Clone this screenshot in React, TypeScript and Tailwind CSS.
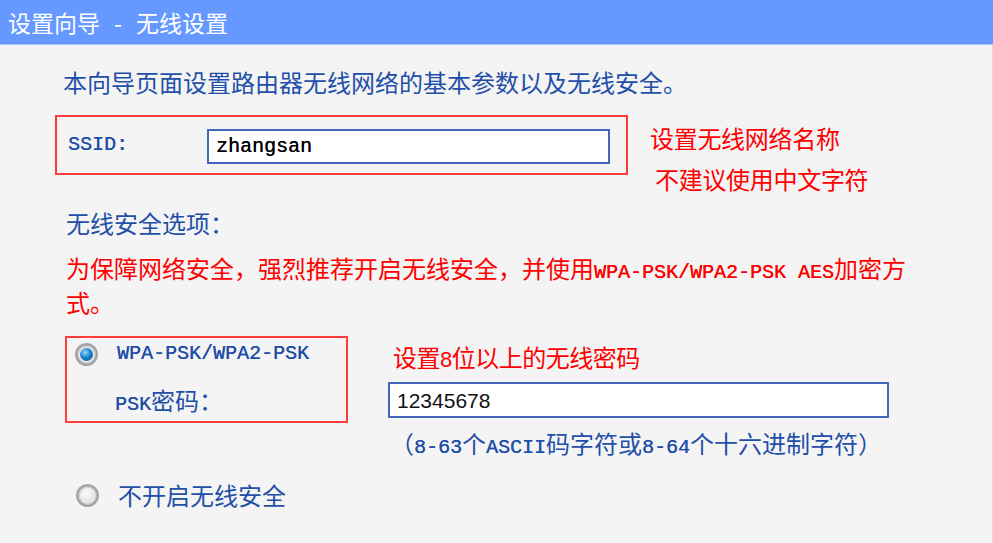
import React from "react";

const cjk = "font-['Noto_Sans_CJK_SC',sans-serif]";
const mono =
  "font-['Liberation_Mono','Noto_Sans_CJK_SC',monospace] text-[20px] leading-none [text-shadow:0.3px_0_0_currentColor]";

function Radio({ checked }: { checked?: boolean }) {
  return (
    <div className="w-[23px] h-[23px] shrink-0 rounded-full bg-[radial-gradient(circle,#f4f4f4_42%,#9c9c9c_62%,#d8d8d8_90%)] flex items-center justify-center">
      {checked ? (
        <div className="w-[13px] h-[13px] rounded-full bg-[radial-gradient(circle_at_40%_35%,#9ad8ff,#1b83d0_45%,#0b3f7c)]" />
      ) : (
        <div className="w-[13px] h-[13px] rounded-full bg-[radial-gradient(circle_at_40%_35%,#ffffff,#e6e6e6_60%,#cfcfcf)]" />
      )}
    </div>
  );
}

export default function App() {
  return (
    <div className={`w-[993px] h-[543px] overflow-hidden bg-[#f4f4f4] flex flex-col ${cjk}`}>
      <div className="h-[45px] shrink-0 bg-[#6699ff] border-b border-[#a9c5ff] flex items-center pl-[8px] text-white text-[23px]">
        设置向导<span className="mx-[14px]">-</span>无线设置
      </div>

      <div className="flex-1 flex flex-col border-r border-[#f0d8b8] text-[#1f4fa8] text-[24px] leading-[32px]">
        <div className="mt-[21px] ml-[63px]">本向导页面设置路由器无线网络的基本参数以及无线安全。</div>

        <div className="mt-[17px] ml-[55px] flex items-start h-[60px]">
          <div className="w-[573px] h-[60px] border-2 border-[#ff3b3b] flex items-center pl-[11px]">
            <span className={`${mono} w-[139px]`}>SSID:</span>
            <div className="w-[403px] h-[35px] mt-[3px] border-2 border-[#4466bb] bg-white flex items-center pl-[7px]">
              <span className={`${mono} text-black`}>zhangsan</span>
            </div>
          </div>
          <div className="ml-[22px] pt-[2px] text-[#ff0000] leading-[41px] tracking-[-0.3px]">
            <div>设置无线网络名称</div>
            <div className="pl-[5px]">不建议使用中文字符</div>
          </div>
        </div>

        <div className="mt-[32px] ml-[66px]">无线安全选项：</div>

        <div className="mt-[12px] ml-[66px] text-[#ff0000] leading-[34px]">
          <div className="h-[34px]">
            为保障网络安全，强烈推荐开启无线安全，并使用<span className={mono}>WPA-PSK/WPA2-PSK AES</span>加密方
          </div>
          <div className="h-[34px]">式。</div>
        </div>

        <div className="mt-[17px] ml-[65px] flex items-start">
          <div className="w-[283px] h-[87px] border-2 border-[#ff3b3b] flex flex-col pt-[4px] pl-[8px]">
            <div className="flex items-center h-[24px]">
              <Radio checked />
              <span className={`${mono} ml-[19px]`}>WPA-PSK/WPA2-PSK</span>
            </div>
            <div className="mt-[18px] ml-[40px] h-[32px]">
              <span className={mono}>PSK</span>密码：
            </div>
          </div>
          <div className="ml-[40px] flex flex-col">
            <div className="h-[32px] mt-[5px] pl-[5px] text-[#ff0000] tracking-[-0.5px]">
              设置<span className="font-['Liberation_Sans',sans-serif] text-[22px] leading-none">8</span>位以上的无线密码
            </div>
            <div className="mt-[9px] w-[501px] h-[36px] border-2 border-[#4466bb] bg-white flex items-center pl-[7px]">
              <span className="font-['Liberation_Sans',sans-serif] text-[21px] leading-none text-[#111]">12345678</span>
            </div>
            <div className="h-[32px] mt-[9px] ml-[2px]">
              （<span className={mono}>8-63</span>个<span className={mono}>ASCII</span>码字符或<span className={mono}>8-64</span>个十六进制字符）
            </div>
          </div>
        </div>

        <div className="mt-[20px] ml-[76px] h-[32px] flex items-center">
          <Radio />
          <span className="ml-[19px]">不开启无线安全</span>
        </div>
      </div>
    </div>
  );
}
